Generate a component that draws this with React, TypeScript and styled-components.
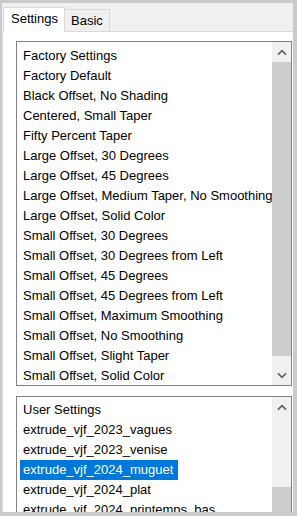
import React from "react";
import styled, { createGlobalStyle } from "styled-components";

const Global = createGlobalStyle`
  html, body { margin: 0; padding: 0; background: #cbcbcb; }
  body { font-family: "Liberation Sans", Arial, sans-serif; }
`;

const Frame = styled.div`
  width: 297px;
  height: 516px;
  box-sizing: border-box;
  padding: 3px 4px 4px 2px;
  background: #cbcbcb;
  overflow: hidden;
  display: flex;
`;

const Window = styled.div`
  flex: 1;
  min-width: 0;
  background: #f0f0f0;
  display: flex;
  flex-direction: column;
  overflow: hidden;
`;

const TabStrip = styled.div`
  height: 28px;
  flex: none;
  display: flex;
  align-items: flex-end;
  padding-left: 1px;
  position: relative;
  z-index: 1;
`;

const Tab = styled.div<{ $active?: boolean }>`
  box-sizing: border-box;
  height: ${(p) => (p.$active ? 25 : 22)}px;
  margin-bottom: ${(p) => (p.$active ? -1 : 0)}px;
  padding: ${(p) => (p.$active ? "3px 6px 0 7px" : "3px 6px 0 6px")};
  background: ${(p) => (p.$active ? "#ffffff" : "#f0f0f0")};
  border: 1px solid #d9d9d9;
  border-bottom: none;
  ${(p) => (!p.$active ? "border-left: none;" : "")}
  font-size: 13px;
  line-height: 15px;
  color: #000;
  white-space: nowrap;
`;

const Panel = styled.div`
  flex: 1;
  min-height: 0;
  background: #ffffff;
  border-top: 1px solid #d9d9d9;
  border-left: 1px solid #d9d9d9;
  padding: 9px 0 0 13px;
  display: flex;
  flex-direction: column;
  gap: 10px;
  overflow: hidden;
`;

const ListBox = styled.div<{ $h: number }>`
  flex: none;
  width: 276px;
  height: ${(p) => p.$h}px;
  box-sizing: border-box;
  border: 1px solid #828282;
  background: #fff;
  display: flex;
`;

const Items = styled.div<{ $top: number }>`
  flex: 1;
  min-width: 0;
  overflow: hidden;
  padding: ${(p) => p.$top}px 0 0 3px;
`;

const Item = styled.div`
  height: 20px;
  line-height: 20px;
  font-size: 13px;
  white-space: nowrap;
  color: #000;
`;

const Label = styled.span<{ $selected?: boolean }>`
  display: inline-block;
  padding: 0 5px 0 3px;
  background: ${(p) => (p.$selected ? "#0078d7" : "transparent")};
  color: ${(p) => (p.$selected ? "#ffffff" : "#000000")};
`;

const ScrollBar = styled.div`
  flex: none;
  width: 19px;
  background: #f0f0f0;
  display: flex;
  flex-direction: column;
`;

const Arrow = styled.div`
  flex: none;
  height: 20px;
  display: flex;
  align-items: center;
  justify-content: center;
`;

const Track = styled.div`
  flex: 1;
  min-height: 0;
  display: flex;
  flex-direction: column;
`;

const TrackGap = styled.div<{ $h: number }>`
  flex: none;
  height: ${(p) => p.$h}px;
`;

const Thumb = styled.div<{ $h: number }>`
  flex: none;
  height: ${(p) => p.$h}px;
  background: #cdcdcd;
`;

const Chevron = ({ dir }: { dir: "up" | "down" }) => (
  <svg width="10" height="7" viewBox="0 0 10 7">
    <path
      d={dir === "up" ? "M1 5.6 L5 1.6 L9 5.6" : "M1 1.4 L5 5.4 L9 1.4"}
      fill="none"
      stroke="#606060"
      strokeWidth="1.6"
    />
  </svg>
);

const factory = [
  "Factory Settings",
  "Factory Default",
  "Black Offset, No Shading",
  "Centered, Small Taper",
  "Fifty Percent Taper",
  "Large Offset, 30 Degrees",
  "Large Offset, 45 Degrees",
  "Large Offset, Medium Taper, No Smoothing",
  "Large Offset, Solid Color",
  "Small Offset, 30 Degrees",
  "Small Offset, 30 Degrees from Left",
  "Small Offset, 45 Degrees",
  "Small Offset, 45 Degrees from Left",
  "Small Offset, Maximum Smoothing",
  "Small Offset, No Smoothing",
  "Small Offset, Slight Taper",
  "Small Offset, Solid Color",
];

const user = [
  "User Settings",
  "extrude_vjf_2023_vagues",
  "extrude_vjf_2023_venise",
  "extrude_vjf_2024_muguet",
  "extrude_vjf_2024_plat",
  "extrude_vjf_2024_printemps_bas",
];

export default function App() {
  return (
    <>
      <Global />
      <Frame>
        <Window>
          <TabStrip>
            <Tab $active>Settings</Tab>
            <Tab>Basic</Tab>
          </TabStrip>
          <Panel>
            <ListBox $h={345}>
              <Items $top={4}>
                {factory.map((t) => (
                  <Item key={t}>
                    <Label>{t}</Label>
                  </Item>
                ))}
              </Items>
              <ScrollBar>
                <Arrow>
                  <Chevron dir="up" />
                </Arrow>
                <Track>
                  <Thumb $h={294} />
                </Track>
                <Arrow>
                  <Chevron dir="down" />
                </Arrow>
              </ScrollBar>
            </ListBox>
            <ListBox $h={140}>
              <Items $top={3}>
                {user.map((t) => (
                  <Item key={t}>
                    <Label $selected={t === "extrude_vjf_2024_muguet"}>{t}</Label>
                  </Item>
                ))}
              </Items>
              <ScrollBar>
                <Arrow>
                  <Chevron dir="up" />
                </Arrow>
                <Track>
                  <TrackGap $h={70} />
                  <Thumb $h={60} />
                </Track>
              </ScrollBar>
            </ListBox>
          </Panel>
        </Window>
      </Frame>
    </>
  );
}
